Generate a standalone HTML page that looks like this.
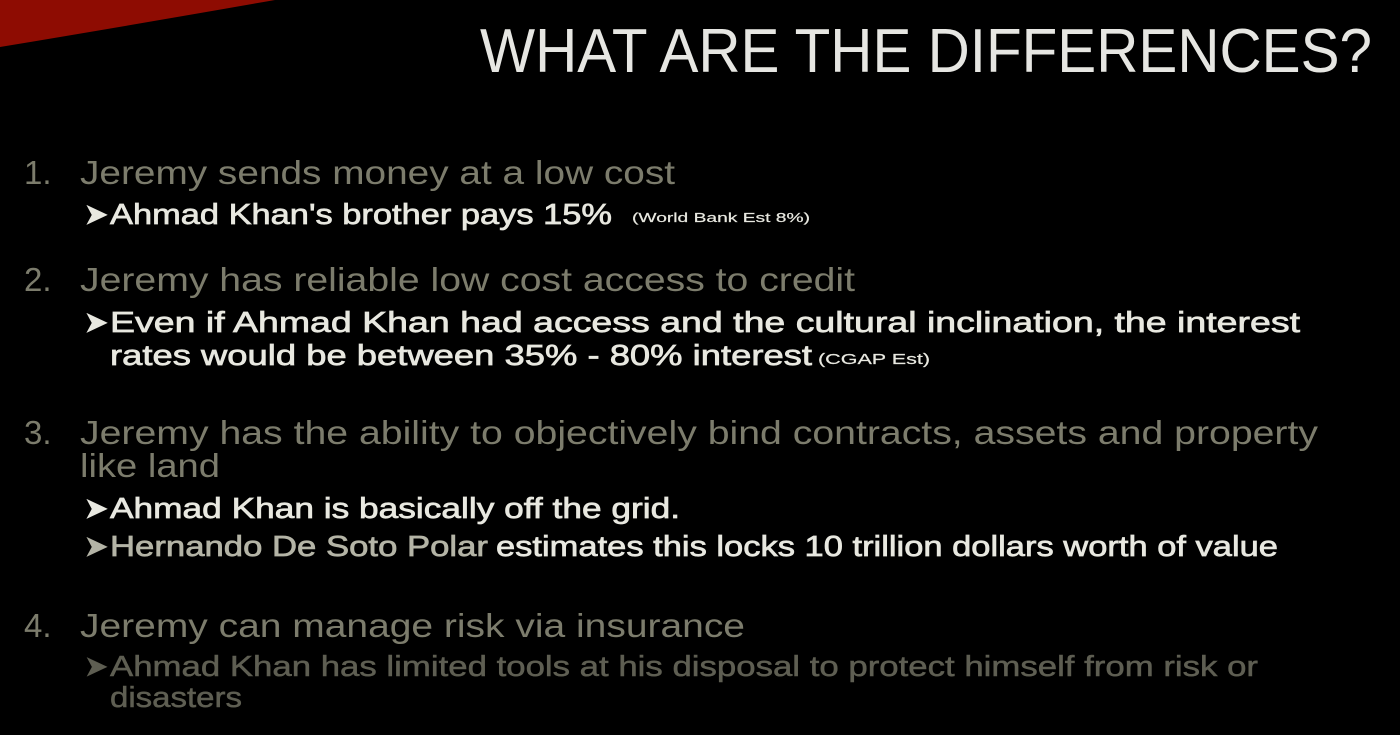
<!DOCTYPE html>
<html><head><meta charset="utf-8"><style>
html,body{margin:0;padding:0;background:#000;overflow:hidden}
svg{display:block}
text{font-family:"Liberation Sans",sans-serif}
</style></head><body>
<svg width="1400" height="735" viewBox="0 0 1400 735">
<rect width="1400" height="735" fill="#000"/>
<path d="M0 0 L275 0 Q150 22 0 47 Z" fill="#8e0c02"/>
<text x="480" y="72" font-size="62" fill="#e6e6e2" textLength="892" lengthAdjust="spacingAndGlyphs">WHAT ARE THE DIFFERENCES?</text>

<g fill="#7c7c6c" font-size="33">
<text x="24" y="184">1.</text>
<text x="80" y="184" textLength="595" lengthAdjust="spacingAndGlyphs">Jeremy sends money at a low cost</text>
<text x="24" y="291">2.</text>
<text x="80" y="291" textLength="775" lengthAdjust="spacingAndGlyphs">Jeremy has reliable low cost access to credit</text>
<text x="24" y="444">3.</text>
<text x="80" y="444" textLength="1238" lengthAdjust="spacingAndGlyphs">Jeremy has the ability to objectively bind contracts, assets and property</text>
<text x="80" y="477" textLength="140" lengthAdjust="spacingAndGlyphs">like land</text>
<text x="24" y="637">4.</text>
<text x="80" y="637" textLength="665" lengthAdjust="spacingAndGlyphs">Jeremy can manage risk via insurance</text>
</g>

<g fill="#e8e8e0" stroke="#e8e8e0" stroke-width="0.7" font-size="29">
<text x="84" y="224">➤</text>
<text x="110" y="224" textLength="502" lengthAdjust="spacingAndGlyphs">Ahmad Khan's brother pays 15%</text>
<text x="632" y="222" font-size="13" stroke-width="0.2" textLength="178" lengthAdjust="spacingAndGlyphs">(World Bank Est 8%)</text>
<text x="84" y="332">➤</text>
<text x="110" y="332" textLength="1190" lengthAdjust="spacingAndGlyphs">Even if Ahmad Khan had access and the cultural inclination, the interest</text>
<text x="110" y="365" textLength="702" lengthAdjust="spacingAndGlyphs">rates would be between 35% - 80% interest</text>
<text x="818" y="364" font-size="15" stroke-width="0.2" textLength="112" lengthAdjust="spacingAndGlyphs">(CGAP Est)</text>
<text x="84" y="518">➤</text>
<text x="110" y="518" textLength="570" lengthAdjust="spacingAndGlyphs">Ahmad Khan is basically off the grid.</text>
<text x="84" y="556" fill="#b4b4a6" stroke="#b4b4a6">➤</text>
<text x="110" y="556" fill="#b4b4a6" stroke="#b4b4a6" textLength="378" lengthAdjust="spacingAndGlyphs">Hernando De Soto Polar</text>
<text x="496" y="556" textLength="782" lengthAdjust="spacingAndGlyphs">estimates this locks 10 trillion dollars worth of value</text>
</g>

<g fill="#5e5e52" stroke="#5e5e52" stroke-width="0.5" font-size="29">
<text x="84" y="676">➤</text>
<text x="110" y="676" textLength="1148" lengthAdjust="spacingAndGlyphs">Ahmad Khan has limited tools at his disposal to protect himself from risk or</text>
<text x="110" y="707" textLength="132" lengthAdjust="spacingAndGlyphs">disasters</text>
</g>
</svg>
</body></html>
